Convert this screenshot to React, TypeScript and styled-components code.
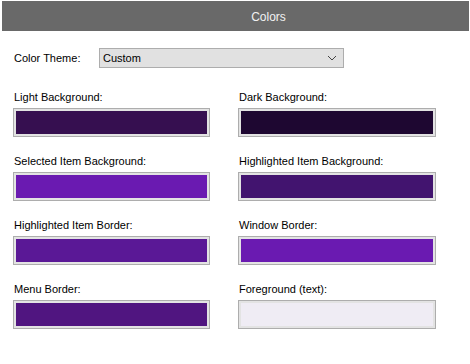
import React from "react";
import styled, { createGlobalStyle } from "styled-components";

const GlobalStyle = createGlobalStyle`
body {
    margin: 0;
    background: #ffffff;
    font-family: "Liberation Sans", Arial, sans-serif;
    font-size: 11px;
    color: #000000;
}
`

type Swatch = { label: string; color: string };

const swatches: Swatch[] = [
    { label: "Light Background:", color: "#360f50" },
    { label: "Dark Background:", color: "#1e0731" },
    { label: "Selected Item Background:", color: "#6a1ab1" },
    { label: "Highlighted Item Background:", color: "#42146f" },
    { label: "Highlighted Item Border:", color: "#5a1896" },
    { label: "Window Border:", color: "#6a1ab1" },
    { label: "Menu Border:", color: "#501580" },
    { label: "Foreground (text):", color: "#efecf4" },
];

export default function App() {
    return (
        <>
            <GlobalStyle />
            <Panel>
                <Header>
                    <HeaderTitle>Colors</HeaderTitle>
                </Header>
                <Body>
                    <ThemeRow>
                        <ThemeLabel>Color Theme:</ThemeLabel>
                        <Select>
                            <span>Custom</span>
                            <svg width="10" height="6" viewBox="0 0 10 6">
                                <path d="M1 1 L5 5 L9 1" fill="none" stroke="#444" strokeWidth="1" />
                            </svg>
                        </Select>
                    </ThemeRow>
                    <Grid>
                        {swatches.map((s) => (
                            <Field key={s.label}>
                                <FieldLabel>{s.label}</FieldLabel>
                                <ColorBox>
                                    <ColorFill $color={s.color} />
                                </ColorBox>
                            </Field>
                        ))}
                    </Grid>
                </Body>
            </Panel>
        </>
    );
}

const Panel = styled.div`
width: 470px;
height: 364px;
padding-top: 1px;
box-sizing: border-box;
`

const Header = styled.div`
margin: 0 1px 0 2px;
height: 30px;
background: #696969;
display: flex;
align-items: center;
justify-content: center;
padding: 1px 0 0 66px;
box-sizing: border-box;
`

const HeaderTitle = styled.span`
color: #f2f2f2;
font-size: 12px;
`

const Body = styled.div`
padding: 17px 0 0 13px;
`

const ThemeRow = styled.div`
display: flex;
align-items: center;
height: 20px;
`

const ThemeLabel = styled.span`
width: 85px;
flex-shrink: 0;
padding-left: 1px;
`

const Select = styled.div`
width: 245px;
height: 20px;
flex-shrink: 0;
box-sizing: border-box;
border: 1px solid #adadad;
background: #e1e1e1;
display: flex;
align-items: center;
justify-content: space-between;
padding: 0 6px 0 3px;
`

const Grid = styled.div`
display: grid;
grid-template-columns: 197px 198px;
column-gap: 28px;
row-gap: 17px;
margin-top: 22px;
`

const Field = styled.div`
display: flex;
flex-direction: column;
gap: 3px;
`

const FieldLabel = styled.span`
line-height: 15px;
padding-left: 1px;
`

const ColorBox = styled.div`
height: 29px;
box-sizing: border-box;
border: 1px solid #adadad;
background: #e3e3e3;
padding: 2px;
`

const ColorFill = styled.div<{ $color: string }>`
height: 100%;
background: ${(p) => p.$color};
`
